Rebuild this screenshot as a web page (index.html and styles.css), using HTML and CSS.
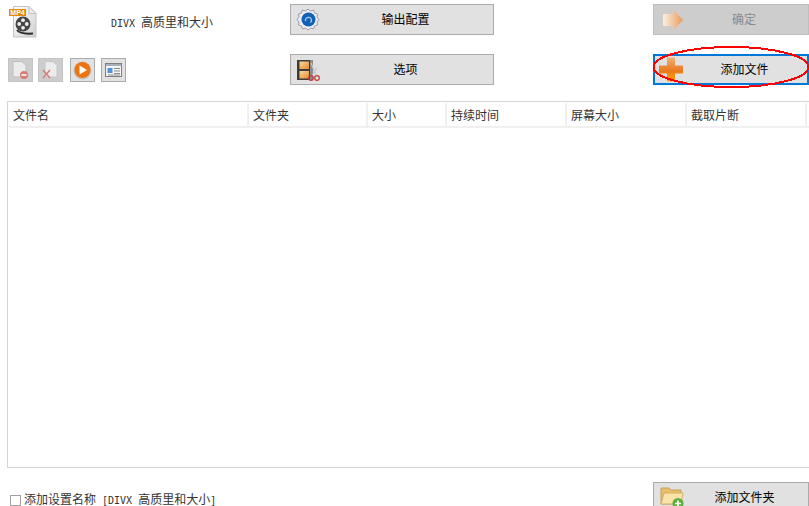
FILE: index.html
```html
<!DOCTYPE html>
<html lang="zh-CN">
<head>
<meta charset="utf-8">
<title>DIVX</title>
<link rel="stylesheet" href="styles.css">
</head>
<body>
<div class="page">
  <header class="top">
    <div class="profile">
      <svg class="mp4-icon soft" width="28" height="34" viewBox="0 0 28 34">
        <defs><linearGradient id="pg" x1="0" y1="0" x2="1" y2="1"><stop offset="0" stop-color="#fff"/><stop offset="1" stop-color="#d0d0d0"/></linearGradient></defs>
        <path d="M4.500 1.500H20L27 8.500V32H4.500Z" fill="url(#pg)" stroke="#c4c4c4"/>
        <path d="M20 1.500V8.500H27Z" fill="#ececec" stroke="#c4c4c4"/>
        <circle cx="14" cy="19" r="7.500" fill="#444"/>
        <circle cx="14" cy="15.200" r="1.900" fill="#eee"/><circle cx="10.200" cy="19" r="1.900" fill="#eee"/><circle cx="17.800" cy="19" r="1.900" fill="#eee"/><circle cx="14" cy="22.800" r="1.900" fill="#eee"/>
        <path d="M8 25C11 29 17 29 24 28.500" fill="none" stroke="#2b2b2b" stroke-width="2"/>
      </svg>
      <span class="mp4-tag">MP4</span>
      <div class="profile-name"><span class="latin">DIVX </span>高质里和大小</div>
    </div>
    <button class="btn btn-config"><svg class="ico soft" width="24" height="24" viewBox="0 0 24 24">
      <path d="M12 1l2.500 2 3-1 1 3 3 1-.5 3 2 2.500-2 2.500.5 3-3 1-1 3-3-1-2.500 2-2.500-2-3 1-1-3-3-1 .5-3-2-2.500 2-2.500-.5-3 3-1 1-3 3 1Z" fill="#eceef1" stroke="#9a9fa6"/>
      <circle cx="12.500" cy="11.500" r="7" fill="#1363b5"/>
      <path d="M9.500 13a3 3 0 1 1 5 1.500" fill="none" stroke="#a9cdee" stroke-width="1.300"/>
    </svg><span class="label">输出配置</span></button>
    <button class="btn btn-ok"><svg class="ico soft" width="24" height="24" viewBox="0 0 24 24">
      <defs><linearGradient id="ar" x1="0" y1="0" x2="1" y2="0"><stop offset="0" stop-color="#f7efdf"/><stop offset="1" stop-color="#eb9a5c"/></linearGradient></defs>
      <path d="M1 6H11V1L21 12 11 23V18H1Z" fill="url(#ar)"/>
    </svg><span class="label">确定</span></button>

    <div class="tools">
      <button class="tool tool-off"><svg class="soft" width="17" height="19" viewBox="0 0 17 19"><path d="M1 .5H10L14 4.500V16H1Z" fill="#ececec" stroke="#bdbdbd"/><circle cx="12" cy="14" r="4" fill="#d97b74"/><rect x="9.500" y="13" width="5" height="2" fill="#f3e3e0"/></svg></button>
      <button class="tool tool-off"><svg class="soft" width="17" height="19" viewBox="0 0 17 19"><path d="M3 .5H11L15 4.500V16H3Z" fill="#ececec" stroke="#c6c6c6"/><path d="M1 17L8 9M1 9L8 17" stroke="#d97b74" stroke-width="1.500"/></svg></button>
      <button class="tool tool-play"><svg class="soft" width="19" height="19" viewBox="0 0 19 19"><circle cx="9.500" cy="9.500" r="9" fill="#c4c4c4"/><circle cx="9.500" cy="9" r="8" fill="#ee7410"/><path d="M6.500 4.500L14 9 6.500 13.500Z" fill="#fff"/></svg></button>
      <button class="tool"><svg width="17" height="14" viewBox="0 0 17 14"><rect x=".5" y=".5" width="16" height="13" fill="#f4f4f4" stroke="#7f7f7f"/><rect x="1" y="1" width="15" height="2" fill="#a9b2bb"/><rect x="2.500" y="5" width="5" height="5" fill="#4f94d8"/><path d="M9 5.500H15M9 8H15M9 10.500H15M3 12H15" stroke="#8e8e8e"/></svg></button>
    </div>
    <button class="btn btn-options"><svg class="ico soft" width="24" height="24" viewBox="0 0 24 24">
      <defs><linearGradient id="fr" x1="0" y1="0" x2="1" y2="1"><stop offset="0" stop-color="#fbd9a0"/><stop offset="1" stop-color="#e98a2c"/></linearGradient></defs>
      <rect x="1" y="2" width="16" height="20" fill="#3c3c3c"/>
      <rect x="14" y="2" width="3" height="20" fill="#8c8c8c"/>
      <rect x="3.500" y="3.500" width="9.500" height="7.500" fill="url(#fr)"/>
      <rect x="3.500" y="13" width="9.500" height="7.500" fill="url(#fr)"/>
      <path d="M15 5L20 17M21 9L16 18" stroke="#c9c9c9" stroke-width="1.200"/>
      <circle cx="15" cy="20" r="2.300" fill="none" stroke="#c43a3a" stroke-width="1.200"/>
      <circle cx="21" cy="20" r="2.300" fill="none" stroke="#c43a3a" stroke-width="1.200"/>
    </svg><span class="label">选项</span></button>
    <div class="add-wrap">
      <button class="btn btn-focus"><svg class="ico soft" width="26" height="26" viewBox="0 0 26 26">
        <defs><linearGradient id="pl" x1="0" y1="0" x2="0" y2="1"><stop offset="0" stop-color="#f4b27a"/><stop offset=".55" stop-color="#e9781e"/><stop offset="1" stop-color="#ffa600"/></linearGradient></defs>
        <path d="M9 .500H17V8.500H25V16.500H17V24.500H9V16.500H1V8.500H9Z" fill="url(#pl)"/>
      </svg><span class="label">添加文件</span></button>
      <svg class="mark" width="158" height="42" viewBox="0 0 158 42"><ellipse cx="79" cy="21" rx="77.500" ry="20" fill="none" stroke="#f00" stroke-width="2"/></svg>
    </div>
  </header>

  <section class="list">
    <div class="list-head">
      <div class="col col-name">文件名</div>
      <div class="col col-folder">文件夹</div>
      <div class="col col-size">大小</div>
      <div class="col col-time">持续时间</div>
      <div class="col col-screen">屏幕大小</div>
      <div class="col col-clip">截取片断</div>
    </div>
  </section>

  <footer class="bottom">
    <label class="check"><span class="box"></span><span>添加设置名称<span class="latin"> [DIVX </span>高质里和大小<span class="latin">]</span></span></label>
    <button class="btn btn-folder"><svg class="ico soft" width="26" height="25" viewBox="0 0 26 25">
      <path d="M2 3H10L12 5H22V19H2Z" fill="#e9bf6c" stroke="#c9a256"/><path d="M2 19L5 8H24L22 19Z" fill="#f9e3a9" stroke="#d5ae62"/>
      <circle cx="19" cy="18.500" r="5.500" fill="#5fae3c"/><path d="M16 18.500H22M19 15.500V21.500" stroke="#fff" stroke-width="1.700"/>
    </svg><span class="label">添加文件夹</span></button>
  </footer>
</div>
</body>
</html>
```
FILE: styles.css
```css
html, body {
  margin: 0;
  height: 100%;
  overflow: hidden;
  background: #fff;
}
.page {
  width: 809px;
  height: 506px;
  overflow: hidden;
  font: 12px/16px "Noto Sans CJK SC", "Liberation Sans", sans-serif;
  color: #222;
}
.latin {
  font: 10px/16px "DejaVu Sans Mono", monospace;
  white-space: pre;
}
.soft { filter: blur(.3px); }

/* top bar */
.top {
  display: grid;
  grid-template-columns: 290px 204px 159px 156px;
  grid-template-areas: "p a . c" "t b . d";
  grid-template-rows: 31px 31px;
  row-gap: 19px;
  height: 101px;
  padding-top: 4px;
  box-sizing: border-box;
}
.profile { grid-area: p; position: relative; display: flex; }
.btn-config { grid-area: a; }
.btn-ok { grid-area: c; }
.tools { grid-area: t; }
.btn-options { grid-area: b; }
.add-wrap { grid-area: d; position: relative; }

.mp4-icon { flex: none; margin: 1px 0 0 9px; }
.mp4-tag {
  position: absolute;
  left: 9px;
  top: 5px;
  width: 17px;
  height: 7px;
  background: #e58a00;
  color: #fff;
  font: bold 7px/7px "Liberation Sans", sans-serif;
  text-align: center;
}
.profile-name {
  margin: 10px 0 0 74px;
  color: #333;
  white-space: nowrap;
}

/* buttons */
.btn {
  display: flex;
  align-items: center;
  width: 204px;
  height: 31px;
  padding: 0 0 0 5px;
  box-sizing: border-box;
  border: 1px solid #ababab;
  background: #e1e1e1;
  font: inherit;
  color: #000;
}
.btn-ok, .btn-focus, .btn-folder { width: 156px; }
.ico { flex: none; }
.label { flex: 1; text-align: center; padding: 0 2px 2px 0; }
.btn-ok {
  background: #cdcdcd;
  border-color: #bfbfbf;
  color: #8a8a8a;
}
.btn-ok .ico { margin-left: 3px; }
.btn-ok .label { padding-right: 6px; }
.btn-focus {
  border: 2px solid #0078d7;
  padding-left: 3px;
}
.btn-focus .label { padding-left: 0; }
.btn-folder .label { padding-right: 4px; }
.mark {
  position: absolute;
  left: -1px;
  top: -8px;
  shape-rendering: crispEdges;
}

/* small tools */
.tools {
  display: flex;
  padding: 4px 0 0 8px;
  gap: 5px;
}
.tool {
  display: flex;
  align-items: center;
  justify-content: center;
  width: 25px;
  height: 24px;
  padding: 0;
  box-sizing: border-box;
  border: 1px solid #ababab;
  background: #e1e1e1;
}
.tool-off {
  background: #cdcdcd;
  border-color: #c4c4c4;
}
.tool-play { margin: 0 1px 0 2px; }

/* file list */
.list {
  width: 806px;
  height: 367px;
  margin-left: 7px;
  padding: 1px 0 0 1px;
  box-sizing: border-box;
  border: 1px solid #d5d5d5;
}
.list-head {
  display: flex;
  height: 25px;
  box-sizing: border-box;
  border-bottom: 2px solid #f0f0f0;
  color: #333;
}
.col {
  flex: none;
  box-sizing: border-box;
  padding: 4px 0 0 4px;
  border-right: 2px solid #f0f0f0;
  white-space: nowrap;
}
.col-name { width: 240px; }
.col-folder { width: 119px; }
.col-size { width: 79px; }
.col-time { width: 120px; }
.col-screen { width: 120px; }
.col-clip { width: 120px; }

/* footer */
.bottom {
  display: flex;
  justify-content: space-between;
  padding: 14px 0 0 10px;
}
.check {
  display: flex;
  align-items: center;
  gap: 3px;
  height: 16px;
  margin-top: 10px;
  color: #333;
}
.box {
  width: 11px;
  height: 11px;
  box-sizing: border-box;
  border: 1px solid #a0a0a0;
  background: #fff;
}
```
